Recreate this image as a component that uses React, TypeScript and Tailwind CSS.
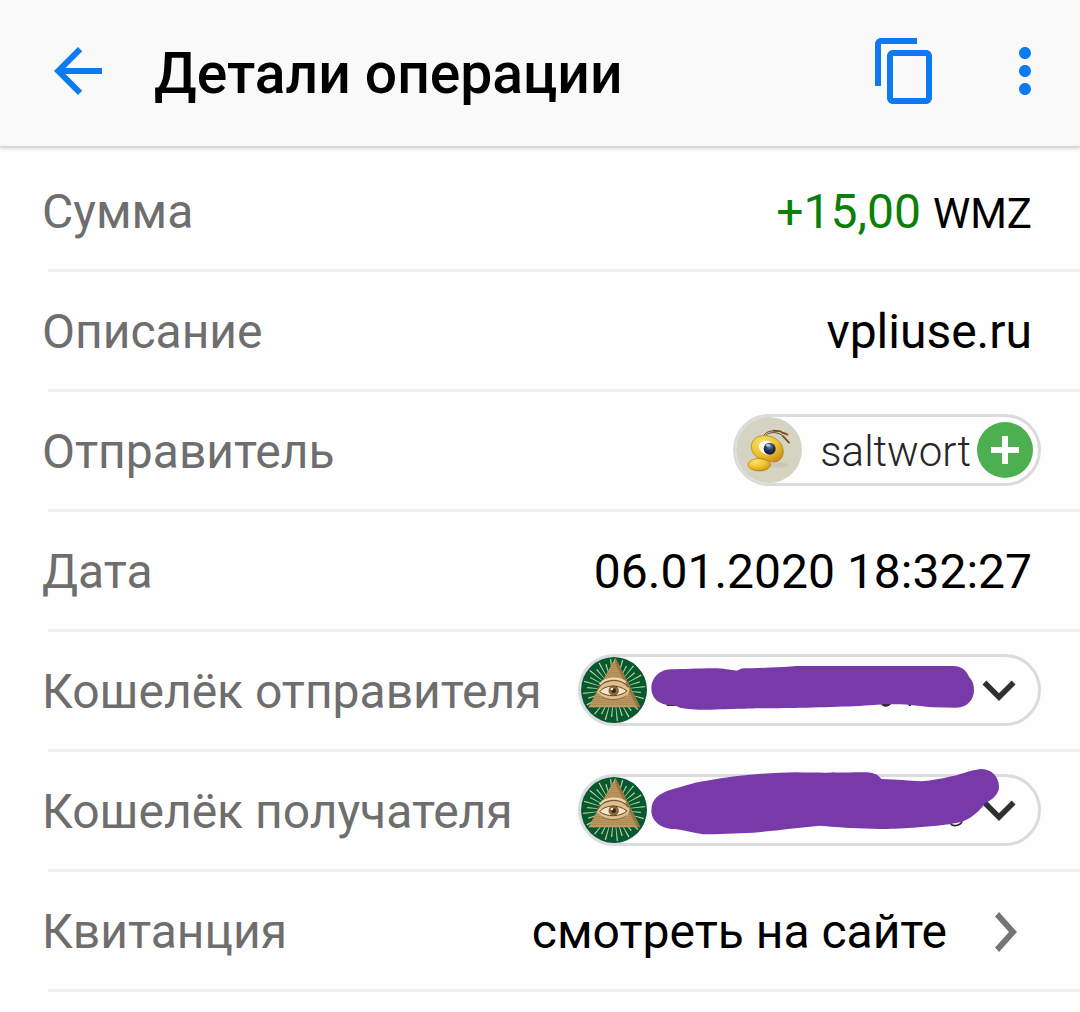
import type { ReactNode } from "react";
import { MdArrowBack, MdContentCopy, MdMoreVert, MdKeyboardArrowDown } from "react-icons/md";

function BeeAvatar() {
  return (
    <svg viewBox="0 0 198 198" className="size-[66px] shrink-0 rounded-full" aria-hidden="true">
      <defs>
        <radialGradient id="beeHead" cx="0.35" cy="0.25" r="0.85">
          <stop offset="0" stopColor="#fbe26a" />
          <stop offset="0.55" stopColor="#f0c02a" />
          <stop offset="1" stopColor="#c48a18" />
        </radialGradient>
        <radialGradient id="beeEye" cx="0.5" cy="0.3" r="0.7">
          <stop offset="0" stopColor="#7d8fb8" />
          <stop offset="0.5" stopColor="#26365f" />
          <stop offset="1" stopColor="#10172e" />
        </radialGradient>
      </defs>
      <rect width="198" height="198" fill="#d5d4c2" />
      <ellipse cx="128" cy="144" rx="28" ry="8" fill="#cac9b8" />
      <ellipse cx="70" cy="143" rx="34" ry="19" fill="url(#beeHead)" stroke="#a67c1c" strokeWidth="2" />
      <path
        d="M46 88C47 66 66 55 86 56C116 56 141 76 142 104C142 124 128 136 110 135C98 135 90 128 80 126C60 124 46 108 46 88Z"
        fill="url(#beeHead)"
        stroke="#a67c1c"
        strokeWidth="2"
      />
      <ellipse cx="93" cy="92" rx="25" ry="20" fill="#fbfaf4" transform="rotate(25 93 92)" />
      <circle cx="101" cy="95" r="18" fill="url(#beeEye)" />
      <ellipse cx="96" cy="85" rx="6" ry="4" fill="#c4cee6" />
      <path d="M84 55C92 40 120 36 154 51" fill="none" stroke="#6b3f1b" strokeWidth="3" />
      <path d="M90 55C100 44 135 38 160 78" fill="none" stroke="#6b3f1b" strokeWidth="3" />
      <path d="M112 41L134 43M138 47L155 53M140 57L159 77" stroke="#7a4d26" strokeWidth="5" strokeLinecap="round" />
    </svg>
  );
}

const rays = Array.from({ length: 32 }, (_, i) => i * 11.25 + 5);
const bricks = Array.from({ length: 21 }, (_, i) => 22 + i * 6);

function PyramidAvatar() {
  return (
    <svg viewBox="0 0 198 198" className="size-[66px] shrink-0 rounded-full" aria-hidden="true">
      <rect width="198" height="198" fill="#07582f" />
      {rays.map((a, i) => (
        <path
          key={a}
          d={i % 2 ? "M115 99L192 97V101Z" : "M115 99L180 97V101Z"}
          fill="#b9d6a0"
          transform={`rotate(${a} 99 99)`}
        />
      ))}
      <path d="M103 2L178 151H22Z" fill="#c09a64" />
      <path d="M103 2L178 151H168L103 20Z" fill="#94713f" />
      {bricks.map((y) => (
        <path
          key={y}
          d={`M${103 - (y - 2) * 0.54} ${y}H${103 + (y - 2) * 0.5}`}
          stroke="#a37f4b"
          strokeWidth="2"
        />
      ))}
      <path d="M48 106C58 74 88 62 112 68C130 72 142 84 146 98L138 118C116 130 82 132 60 116Z" fill="#dcc08f" />
      <path d="M48 100C62 70 112 56 142 90" fill="none" stroke="#7d5a32" strokeWidth="4" />
      <path d="M56 82C74 62 112 58 134 76" fill="none" stroke="#efdcb4" strokeWidth="6" />
      <path d="M56 104C70 84 112 80 138 102C118 120 78 121 56 104Z" fill="#f3e6c8" stroke="#6b4724" strokeWidth="3" />
      <circle cx="98" cy="101" r="14" fill="#9a683e" stroke="#5f3c1f" strokeWidth="2" />
      <circle cx="98" cy="101" r="7" fill="#3a2010" />
      <circle cx="93" cy="96" r="4" fill="#f6ead0" />
      <path d="M62 119C84 132 114 130 136 116" fill="none" stroke="#8f6a3a" strokeWidth="3" />
    </svg>
  );
}

function Row({ label, children }: { label: string; children: ReactNode }) {
  return (
    <div className="ml-12 flex h-[120px] items-center justify-between border-b-[3px] border-[#f0f0f2] pb-px">
      <dt className="-ml-1.5 pt-[3px] whitespace-nowrap text-[#6e6e6e]">{label}</dt>
      <dd className="flex items-center whitespace-nowrap">{children}</dd>
    </div>
  );
}

function WalletPill({ label, children }: { label: string; children: ReactNode }) {
  return (
    <button
      type="button"
      aria-label={label}
      className="relative mr-[39px] flex h-[72px] w-[463px] items-center justify-between rounded-full border-[3px] border-[#dadbdf] pr-1.5"
    >
      <PyramidAvatar />
      <MdKeyboardArrowDown className="size-[66px] text-[#303030]" />
      {children}
    </button>
  );
}

export default function App() {
  return (
    <div className="min-h-screen bg-[#fefefe] font-['Roboto',sans-serif] text-5xl text-black">
      <header className="flex h-[146px] items-center bg-[#f9f9f9] pr-[19px] pb-1 pl-[42px] shadow-[0_1px_4px_1px_rgba(0,0,0,0.22)]">
        <button type="button" aria-label="Назад" className="text-[#0c7bf2]">
          <MdArrowBack className="size-[72px]" />
        </button>
        <h1 className="ml-10 flex-1 pt-1 text-[57px] font-medium">Детали операции</h1>
        <div className="flex gap-12 text-[#0c7bf2]">
          <button type="button" aria-label="Копировать">
            <MdContentCopy className="size-[72px]" />
          </button>
          <button type="button" aria-label="Меню">
            <MdMoreVert className="size-[72px]" />
          </button>
        </div>
      </header>

      <dl className="pt-1.5">
        <Row label="Сумма">
          <span className="mr-12 flex items-baseline gap-3 pt-[3px]">
            <span className="text-[#0a7f0a]">+15,00</span>
            <span className="text-[42px]">WMZ</span>
          </span>
        </Row>
        <Row label="Описание">
          <span className="mr-12 pt-[3px]">vpliuse.ru</span>
        </Row>
        <Row label="Отправитель">
          <div className="mr-[39px] flex h-[72px] items-center rounded-full border-[3px] border-[#dadbdf] pr-[5px]">
            <BeeAvatar />
            <span className="ml-[18px] pt-[3px] text-[42px] font-light text-[#262626]">saltwort</span>
            <button
              type="button"
              aria-label="Добавить"
              className="ml-1.5 flex size-14 items-center justify-center rounded-full bg-[#4caf50]"
            >
              <svg viewBox="0 0 28 28" className="size-7" aria-hidden="true">
                <path d="M14 0V28M0 14H28" stroke="#fff" strokeWidth="6" />
              </svg>
            </button>
          </div>
        </Row>
        <Row label="Дата">
          <span className="mr-12 pt-[3px]">06.01.2020 18:32:27</span>
        </Row>
        <Row label="Кошелёк отправителя">
          <WalletPill label="Кошелёк отправителя">
            {/* marker stroke hiding the number */}
            <svg viewBox="0 0 1260 270" className="absolute -top-3 left-[59px] h-[90px] w-[420px]" aria-hidden="true">
              <path d="M80 178H108V183H80ZM722 176C730 188 744 188 754 176ZM806 176H813V183H806Z" fill="#262626" />
              <path
                d="M92 73C60 73 34 98 34 130C34 160 58 180 90 181C105 180 110 184 120 188C150 193 180 195 210 194C300 192 340 190 370 190C440 190 560 187 640 184C700 181 720 177 750 178C800 176 840 184 880 187L950 188C980 188 1002 165 1002 135C1002 115 995 105 988 97C978 75 965 63 940 63L470 63C400 68 340 70 310 70C300 72 295 76 290 77C270 75 250 70 220 70C170 71 130 72 92 73Z"
                fill="#7839a9"
              />
            </svg>
          </WalletPill>
        </Row>
        <Row label="Кошелёк получателя">
          <WalletPill label="Кошелёк получателя">
            <svg viewBox="0 0 1260 285" className="absolute -top-[17px] left-[59px] h-[95px] w-[420px]" aria-hidden="true">
              <path d="M932 191C938 199 958 200 967 184" fill="none" stroke="#262626" strokeWidth="5" />
              <path
                d="M34 152C34 115 60 100 90 90C140 75 170 65 200 62C290 45 380 38 470 37C560 39 640 37 680 37C705 38 718 48 724 57C770 58 810 62 840 64C880 62 910 55 950 46C980 36 1005 28 1025 27C1055 28 1077 50 1077 80C1077 100 1060 118 1035 130C1025 145 1015 155 1005 162C990 175 975 183 960 187C920 196 860 200 820 203C780 205 750 207 720 207C660 205 600 203 540 197C470 203 400 213 340 218C290 220 230 223 190 223C160 218 130 210 105 207C60 207 34 180 34 152Z"
                fill="#7839a9"
              />
            </svg>
          </WalletPill>
        </Row>
        <Row label="Квитанция">
          <a href="#" className="mr-[63px] flex items-center gap-12 pt-[3px]">
            смотреть на сайте
            <svg viewBox="0 0 22 40" className="h-10 w-[22px]" aria-hidden="true">
              <path d="M4 0L22 20L4 40L0 35.500L14 20L0 4.500Z" fill="#757575" />
            </svg>
          </a>
        </Row>
      </dl>
    </div>
  );
}
